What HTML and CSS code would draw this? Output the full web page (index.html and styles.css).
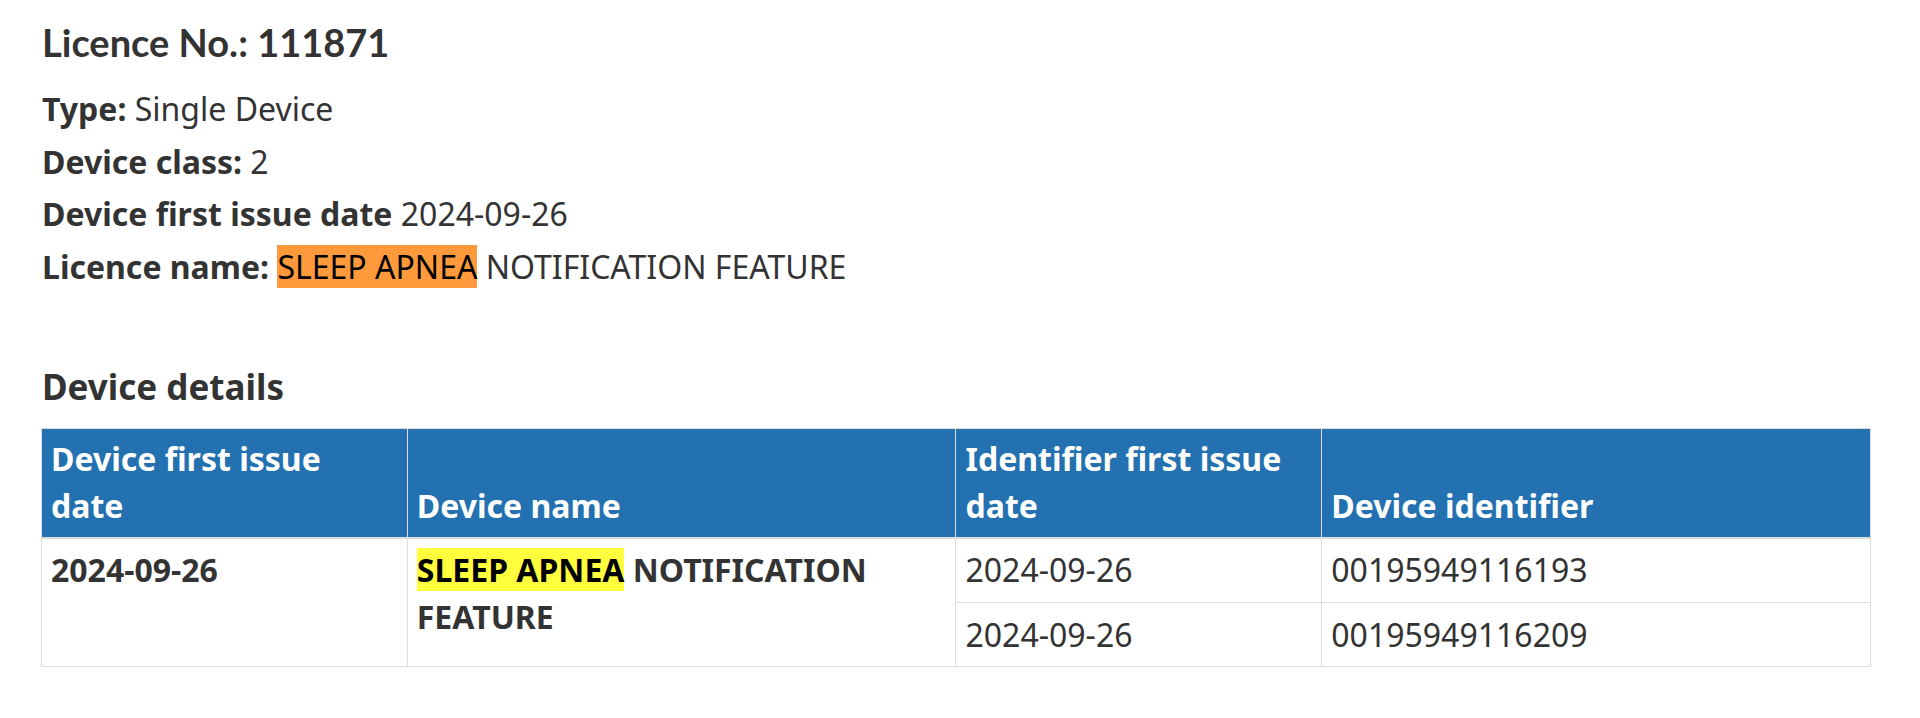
FILE: index.html
```html
<!DOCTYPE html>
<html lang="en">
<head>
<meta charset="utf-8">
<title>Licence 111871</title>
<link rel="stylesheet" href="styles.css">
</head>
<body>
<main class="page">
  <h2 class="licence-title">Licence No.: 111871</h2>
  <div class="facts">
    <div class="fact"><strong>Type:</strong> Single Device</div>
    <div class="fact"><strong>Device class:</strong> 2</div>
    <div class="fact"><strong>Device first issue date</strong> 2024-09-26</div>
    <div class="fact"><strong>Licence name:</strong> <mark class="hl-orange">SLEEP APNEA</mark> NOTIFICATION FEATURE</div>
  </div>
  <h3 class="section-title">Device details</h3>
  <table class="devices">
    <colgroup>
      <col class="c-narrow"><col class="c-wide"><col class="c-narrow"><col class="c-wide">
    </colgroup>
    <thead>
      <tr>
        <th>Device first issue date</th>
        <th>Device name</th>
        <th>Identifier first issue date</th>
        <th>Device identifier</th>
      </tr>
    </thead>
    <tbody>
      <tr>
        <th class="row-head" rowspan="2">2024-09-26</th>
        <td class="name" rowspan="2"><mark class="hl-yellow">SLEEP APNEA</mark> NOTIFICATION FEATURE</td>
        <td>2024-09-26</td>
        <td>00195949116193</td>
      </tr>
      <tr class="second">
        <td>2024-09-26</td>
        <td>00195949116209</td>
      </tr>
    </tbody>
  </table>
</main>
</body>
</html>
```

FILE: styles.css
```css
html, body {
  margin: 0;
  padding: 0;
  background: #ffffff;
}

body {
  font-family: "Noto Sans", "Open Sans", sans-serif;
  color: #333333;
}

.page {
  padding: 20px 49px 0 41px;
}

.licence-title {
  font-family: Lato, "Noto Sans", sans-serif;
  font-weight: 700;
  font-size: 38px;
  line-height: 44px;
  margin: 0 0 19px 1px;
}

.facts {
  font-size: 32px;
  line-height: 52.7px;
  padding-left: 1px;
}

.fact strong {
  font-weight: 700;
}

mark {
  color: #000000;
  padding: 0;
}

.hl-orange {
  background: #ff9a3c;
}

.hl-yellow {
  background: #ffff3d;
}

.section-title {
  font-size: 35px;
  font-weight: 700;
  line-height: 43px;
  margin: 71px 0 20px 1px;
}

.devices {
  width: 100%;
  table-layout: fixed;
  border-collapse: collapse;
  border: 1px solid #dddddd;
  font-size: 32px;
  line-height: 46.7px;
}

.c-narrow { width: 20%; }
.c-wide { width: 30%; }

.devices th,
.devices td {
  border: 1px solid #dddddd;
  padding: 7px 11px 8px 9px;
  text-align: left;
}

.devices thead th {
  background: #2371b0;
  color: #ffffff;
  font-weight: 700;
  vertical-align: bottom;
  border-bottom: 2px solid #dddddd;
}

.devices tbody th,
.devices tbody td {
  vertical-align: top;
  padding-top: 8px;
  font-weight: 400;
}

.devices .second td {
  padding-top: 9px;
  padding-bottom: 7px;
}

.devices .row-head,
.devices .name {
  font-weight: 700;
}
```
